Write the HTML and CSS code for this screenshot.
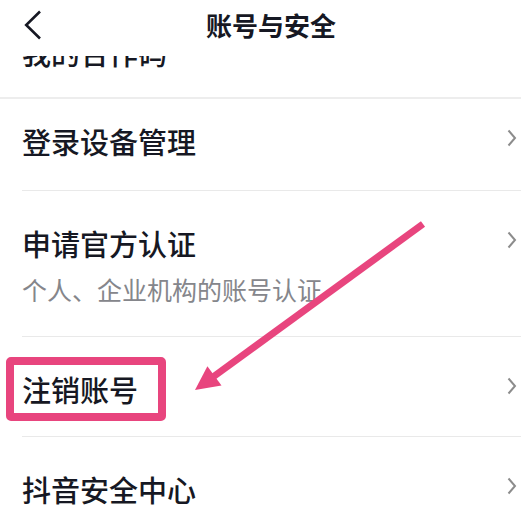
FILE: index.html
```html
<!DOCTYPE html>
<html lang="zh-CN">
<head>
    <meta charset="UTF-8">
    <meta name="viewport" content="width=device-width, initial-scale=1.0">
    <title>账号与安全</title>
    <link rel="stylesheet" href="styles.css">
</head>
<body>
    <div class="page">
        <div class="topbar">
            <svg class="back" width="18" height="32" viewBox="0 0 18 32">
                <path d="M16 2.5 L2.2 16 L16 29.5" fill="none" stroke="#161823" stroke-width="2.6"/>
            </svg>
            <h1 class="title">账号与安全</h1>
        </div>

        <div class="list">
            <div class="list-inner">
                <div class="row row-clipped">
                    <div class="row-main">
                        <span class="row-title">我的合作码</span>
                    </div>
                </div>
                <div class="row row-compact">
                    <div class="row-main">
                        <span class="row-title">登录设备管理</span>
                        <svg class="chevron" width="11" height="18" viewBox="0 0 11 18">
                            <path d="M2.5 1.5 L9 9 L2.5 16.5" fill="none" stroke="#8c8c8c" stroke-width="2"/>
                        </svg>
                    </div>
                </div>
                <div class="row">
                    <div class="row-main">
                        <span class="row-title">申请官方认证</span>
                        <svg class="chevron" width="11" height="18" viewBox="0 0 11 18">
                            <path d="M2.5 1.5 L9 9 L2.5 16.5" fill="none" stroke="#8c8c8c" stroke-width="2"/>
                        </svg>
                    </div>
                    <div class="row-sub">个人、企业机构的账号认证</div>
                </div>
                <div class="row row-marked">
                    <div class="row-main">
                        <span class="row-title mark-box">注销账号</span>
                        <svg class="chevron" width="11" height="18" viewBox="0 0 11 18">
                            <path d="M2.5 1.5 L9 9 L2.5 16.5" fill="none" stroke="#8c8c8c" stroke-width="2"/>
                        </svg>
                    </div>
                </div>
                <div class="row">
                    <div class="row-main">
                        <span class="row-title">抖音安全中心</span>
                        <svg class="chevron" width="11" height="18" viewBox="0 0 11 18">
                            <path d="M2.5 1.5 L9 9 L2.5 16.5" fill="none" stroke="#8c8c8c" stroke-width="2"/>
                        </svg>
                    </div>
                </div>
            </div>
        </div>

        <!-- annotation arrow drawn over the list -->
        <svg class="annotation" width="521" height="511" viewBox="0 0 521 511">
            <line x1="423" y1="224" x2="213" y2="377" stroke="#e8457e" stroke-width="7"/>
            <polygon points="195,390 221.5,385.6 207.4,366.2" fill="#e8457e"/>
        </svg>
    </div>
</body>
</html>
```

FILE: styles.css
```css
body {
    margin: 0;
    background: #fff;
    font-family: "Noto Sans CJK SC", "Noto Sans", sans-serif;
    color: #161823;
}
.page {
    position: relative;
    width: 521px;
    height: 511px;
    overflow: hidden;
    background: #fff;
}
.topbar {
    height: 56px;
    box-sizing: border-box;
    padding: 0 21px 7px 0;
    display: flex;
    align-items: center;
    background: #fff;
}
.back {
    margin-left: 24px;
    flex: none;
}
.title {
    flex: 1;
    margin: 0;
    text-align: center;
    font-size: 26px;
    line-height: 30px;
    font-weight: 700;
}
.list {
    height: 455px;
    overflow: hidden;
}
.list-inner {
    margin-top: -18px;
}
.row {
    margin-left: 22px;
    padding: 38px 4px 34px 0;
    border-bottom: 1px solid #e9e9e9;
}
.row-clipped {
    margin-left: 0;
    padding: 0 0 30px 22px;
    border-bottom: 2px solid #ededed;
}
.row-compact {
    padding-top: 28px;
}
.row-marked {
    padding-top: 20px;
    padding-bottom: 15px;
}
.row-main {
    display: flex;
    align-items: center;
    justify-content: space-between;
}
.row-title {
    font-size: 29px;
    line-height: 29px;
    font-weight: 500;
}
.row-sub {
    margin-top: 19px;
    font-size: 25px;
    line-height: 25px;
    color: #85868b;
}
.chevron {
    flex: none;
    margin-bottom: 7px;
}
.mark-box {
    margin-left: -16px;
    padding: 10px 20px 9px 8px;
    border: 8px solid #e8457e;
    border-radius: 5px;
}
.annotation {
    position: absolute;
    top: 0;
    left: 0;
    pointer-events: none;
}
```
